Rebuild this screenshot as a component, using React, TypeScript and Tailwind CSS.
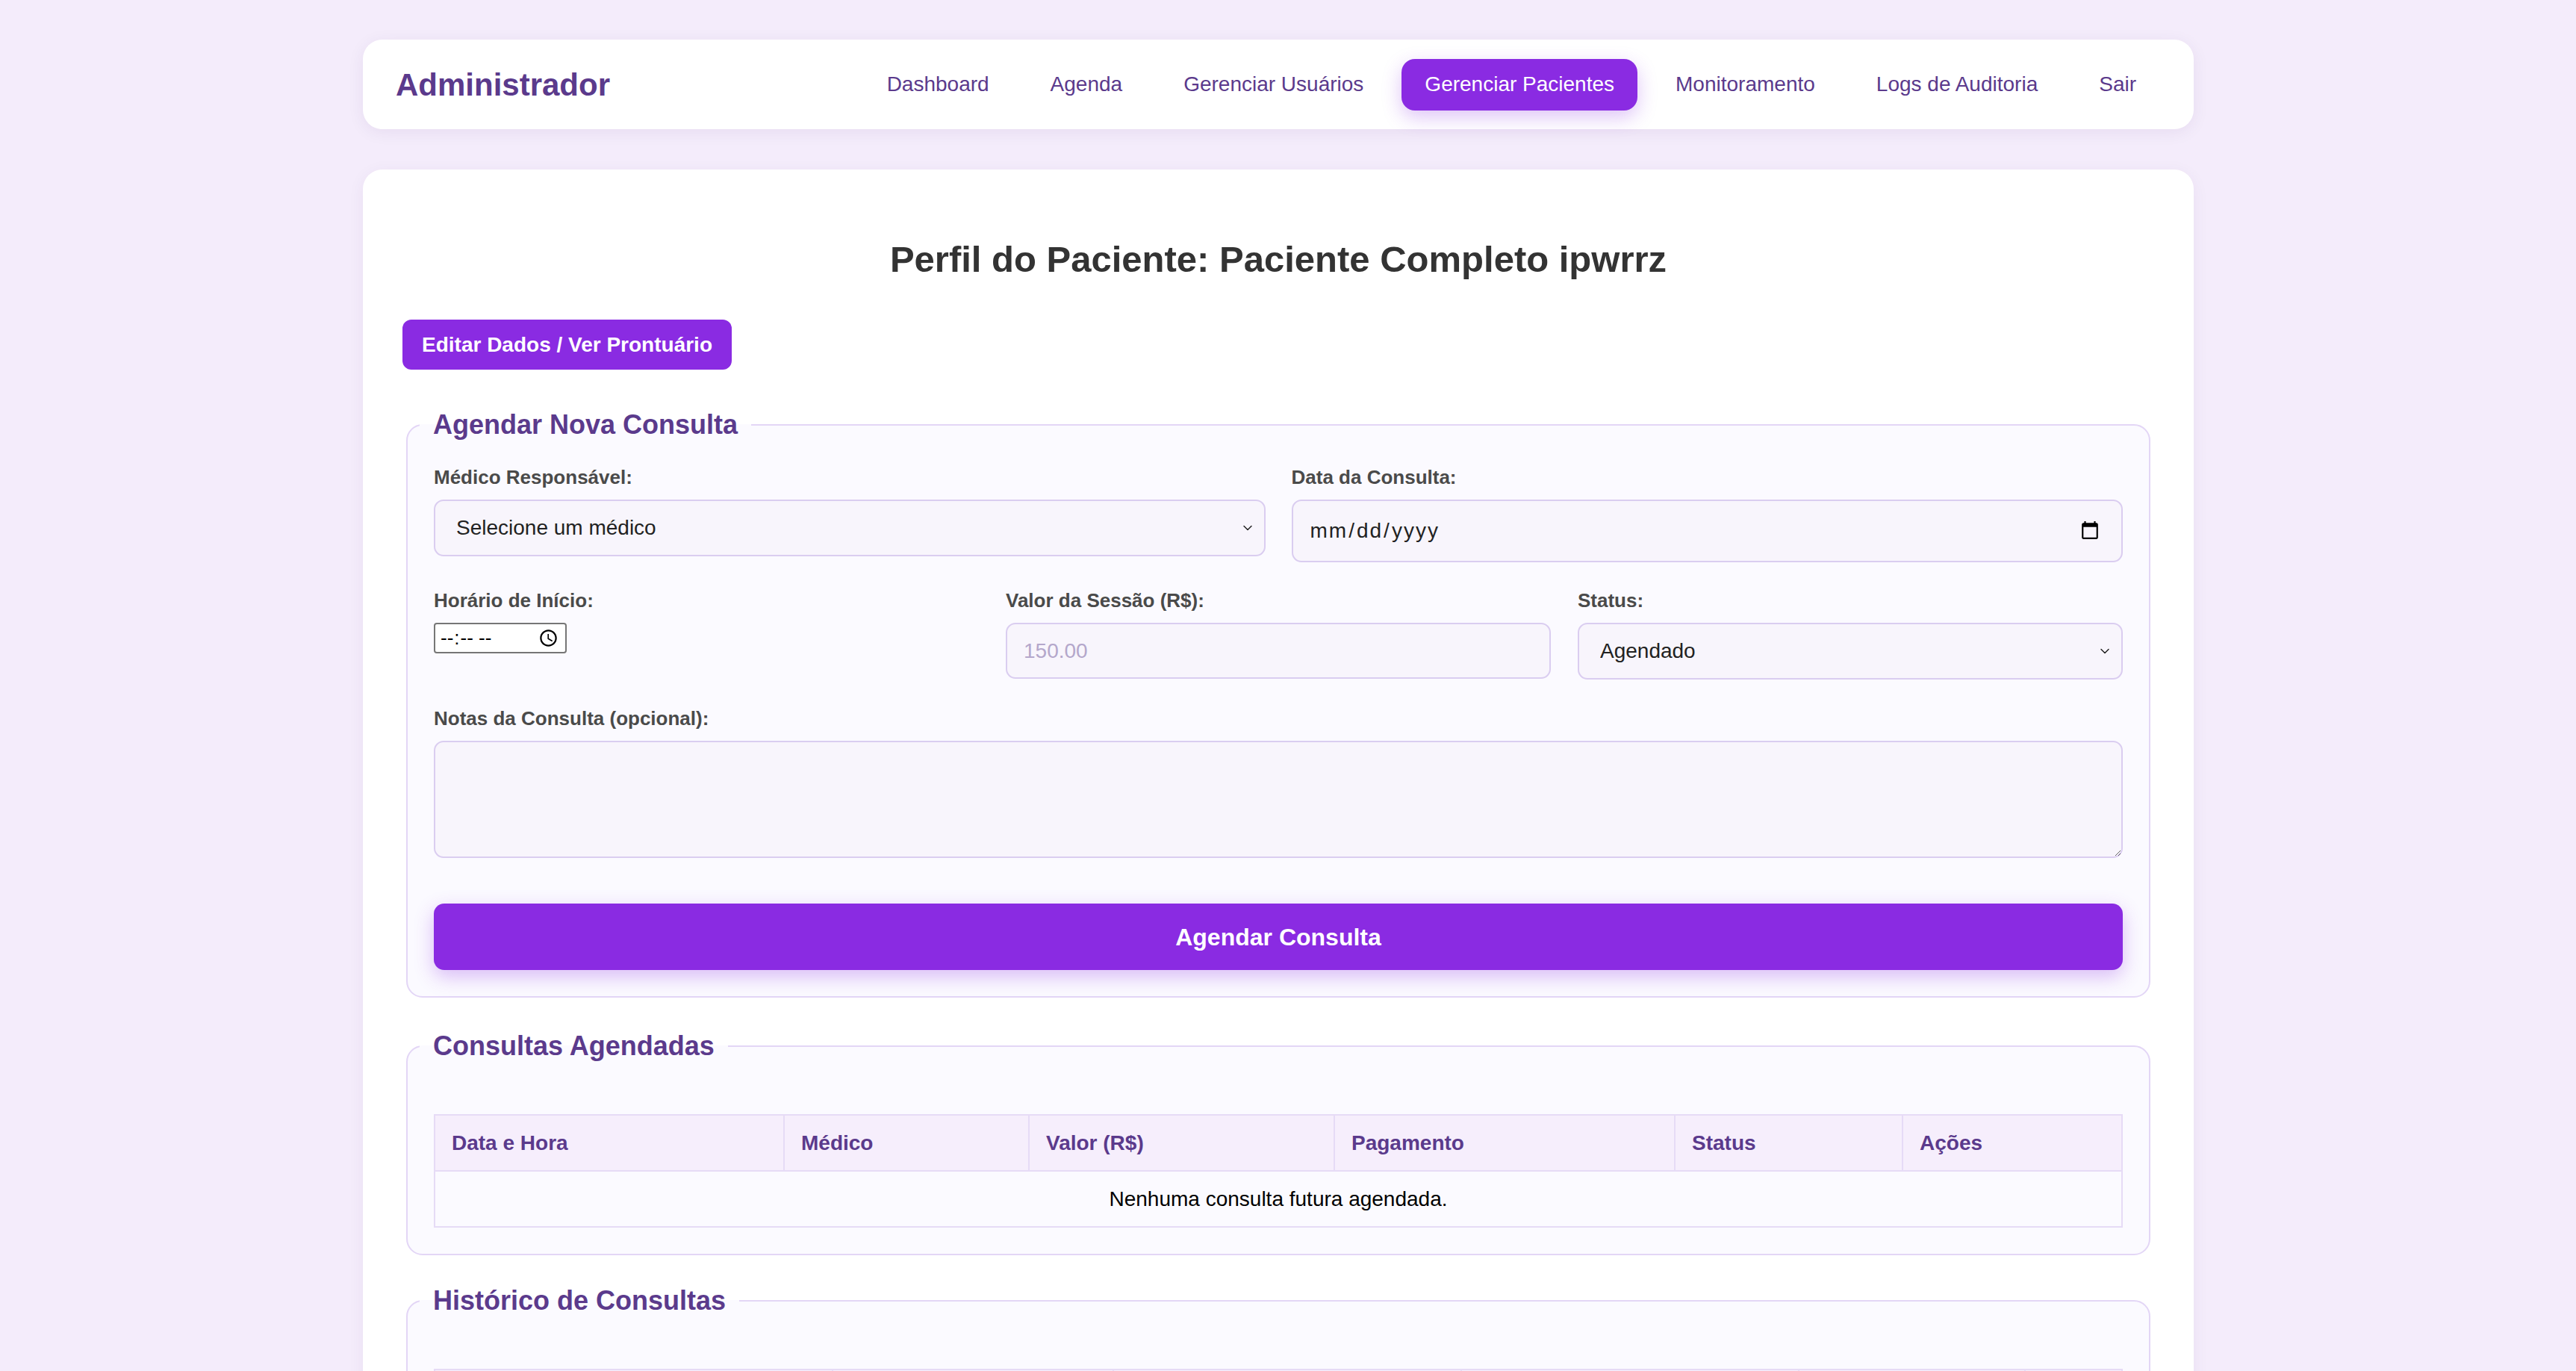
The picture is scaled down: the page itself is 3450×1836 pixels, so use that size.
import { ChevronDown } from "lucide-react";

const NAV_LINKS = [
  { label: "Dashboard" },
  { label: "Agenda" },
  { label: "Gerenciar Usuários" },
  { label: "Gerenciar Pacientes", active: true },
  { label: "Monitoramento" },
  { label: "Logs de Auditoria" },
  { label: "Sair" },
];

const UPCOMING_COLUMNS = [
  { label: "Data e Hora", width: "w-[468px]" },
  { label: "Médico", width: "w-[328px]" },
  { label: "Valor (R$)", width: "w-[409px]" },
  { label: "Pagamento", width: "w-[456px]" },
  { label: "Status", width: "w-[305px]" },
  { label: "Ações", width: "" },
];

const HISTORY_COLUMNS = [
  { label: "Data e Hora", width: "w-[539px]" },
  { label: "Médico", width: "w-[379px]" },
  { label: "Valor (R$)", width: "w-[471px]" },
  { label: "Pagamento", width: "w-[456px]" },
  { label: "Status", width: "w-[305px]" },
  { label: "Ações", width: "" },
];

const inputBase =
  "w-full bg-[#f8f5fc] border-2 border-[#dacdf0] rounded-[13px] text-[28px] text-[#222] outline-none";

function Label({ children }: { children: React.ReactNode }) {
  return (
    <label className="block text-[26px] leading-[30px] font-bold text-[#4a4a4a] mb-[15px]">
      {children}
    </label>
  );
}

function Select({ value, height }: { value: string; height: string }) {
  return (
    <div className="relative">
      <select
        defaultValue={value}
        className={`${inputBase} ${height} appearance-none pl-[28px] pr-[60px]`}
      >
        <option>{value}</option>
      </select>
      {/* chevron */}
      <ChevronDown
        className="absolute right-[14px] top-1/2 -translate-y-1/2 w-[20px] h-[20px] text-[#222] pointer-events-none"
        strokeWidth={1.75}
      />
    </div>
  );
}

function Section({ title, children }: { title: string; children: React.ReactNode }) {
  return (
    <fieldset className="mx-[5px] border-2 border-[#e3d6f6] rounded-[22px] bg-[#fbfaff] px-[35px] pt-[35px] pb-[35px]">
      <legend className="ml-[-19px] px-[18px] text-[36px] leading-[41px] font-bold text-[#5b3a8c]">
        {title}
      </legend>
      {children}
    </fieldset>
  );
}

function AppointmentsTable({
  columns,
  emptyText,
}: {
  columns: { label: string; width: string }[];
  emptyText: string;
}) {
  return (
    <table className="w-full mt-[36px] border-collapse text-[28px]">
      <thead>
        <tr>
          {columns.map((col) => (
            <th
              key={col.label}
              className={`${col.width} h-[75px] px-[22px] text-left font-bold text-[#5b3a8c] bg-[#f6eefc] border-2 border-[#e6dbf6]`}
            >
              {col.label}
            </th>
          ))}
        </tr>
      </thead>
      <tbody>
        <tr>
          <td
            colSpan={columns.length}
            className="h-[75px] text-center text-black bg-[#fbfaff] border-2 border-[#e6dbf6]"
          >
            {emptyText}
          </td>
        </tr>
      </tbody>
    </table>
  );
}

export default function App() {
  return (
    <div className="min-h-screen bg-[#f4ecfb] pt-[53px] pb-[131px] pr-[26px] font-['Liberation_Sans',Arial,sans-serif]">
      <div className="w-[2452px] mx-auto">
        {/* Header / nav */}
        <nav className="h-[120px] bg-white rounded-[26px] shadow-[0_4px_22px_rgba(60,20,100,0.07)] flex items-center justify-between pl-[44px] pr-[46px]">
          <h1 className="text-[42px] font-bold text-[#5b3a8c]">Administrador</h1>
          <ul className="flex items-center gap-[20px]">
            {NAV_LINKS.map((link) => (
              <li key={link.label}>
                <a
                  href="#"
                  className={
                    link.active
                      ? "flex items-center h-[69px] px-[31px] rounded-[18px] text-[28px] text-white bg-[#8a2be2] shadow-[0_9px_26px_rgba(138,43,226,0.28)]"
                      : "flex items-center h-[69px] px-[31px] rounded-[18px] text-[28px] text-[#5b3a8c]"
                  }
                >
                  {link.label}
                </a>
              </li>
            ))}
          </ul>
        </nav>

        {/* Main card */}
        <main className="mt-[54px] bg-white rounded-[26px] shadow-[0_4px_22px_rgba(60,20,100,0.06)] p-[53px]">
          <h2 className="mt-[39px] text-center text-[49px] leading-[56px] font-bold text-[#333]">
            Perfil do Paciente: Paciente Completo ipwrrz
          </h2>

          <button className="mt-[53px] h-[67px] px-[26px] rounded-[12px] bg-[#8a2be2] text-white text-[28px] font-bold">
            Editar Dados / Ver Prontuário
          </button>

          <div className="mt-[53px]">
            <Section title="Agendar Nova Consulta">
              <div className="grid grid-cols-2 gap-x-[35px]">
                <div>
                  <Label>Médico Responsável:</Label>
                  <Select value="Selecione um médico" height="h-[76px]" />
                </div>
                <div>
                  <Label>Data da Consulta:</Label>
                  <input
                    type="date"
                    className={`${inputBase} h-[84px] pl-[22px] pr-[26px] text-[26px] tracking-[2px]`}
                  />
                </div>
              </div>

              <div className="grid grid-cols-3 gap-x-[36px] mt-[36px]">
                <div>
                  <Label>Horário de Início:</Label>
                  <input
                    type="time"
                    className="w-[178px] h-[41px] px-[6px] bg-white border-2 border-[#767676] rounded-[4px] text-[26px] tracking-[3px] text-black"
                  />
                </div>
                <div>
                  <Label>Valor da Sessão (R$):</Label>
                  <input
                    type="text"
                    placeholder="150.00"
                    className={`${inputBase} h-[75px] px-[22px] placeholder:text-[#b4a7cb]`}
                  />
                </div>
                <div>
                  <Label>Status:</Label>
                  <Select value="Agendado" height="h-[76px]" />
                </div>
              </div>

              <div className="mt-[37px]">
                <Label>Notas da Consulta (opcional):</Label>
                <textarea className={`${inputBase} h-[157px] px-[22px] py-[16px] block`} />
              </div>

              <button className="mt-[61px] w-full h-[89px] rounded-[14px] bg-[#8a2be2] text-white text-[32px] font-bold shadow-[0_9px_26px_rgba(138,43,226,0.3)]">
                Agendar Consulta
              </button>
            </Section>
          </div>

          <div className="mt-[44px]">
            <Section title="Consultas Agendadas">
              <AppointmentsTable
                columns={UPCOMING_COLUMNS}
                emptyText="Nenhuma consulta futura agendada."
              />
            </Section>
          </div>

          <div className="mt-[40px]">
            <Section title="Histórico de Consultas">
              <AppointmentsTable
                columns={HISTORY_COLUMNS}
                emptyText="Nenhuma consulta no histórico."
              />
            </Section>
          </div>
        </main>
      </div>
    </div>
  );
}
